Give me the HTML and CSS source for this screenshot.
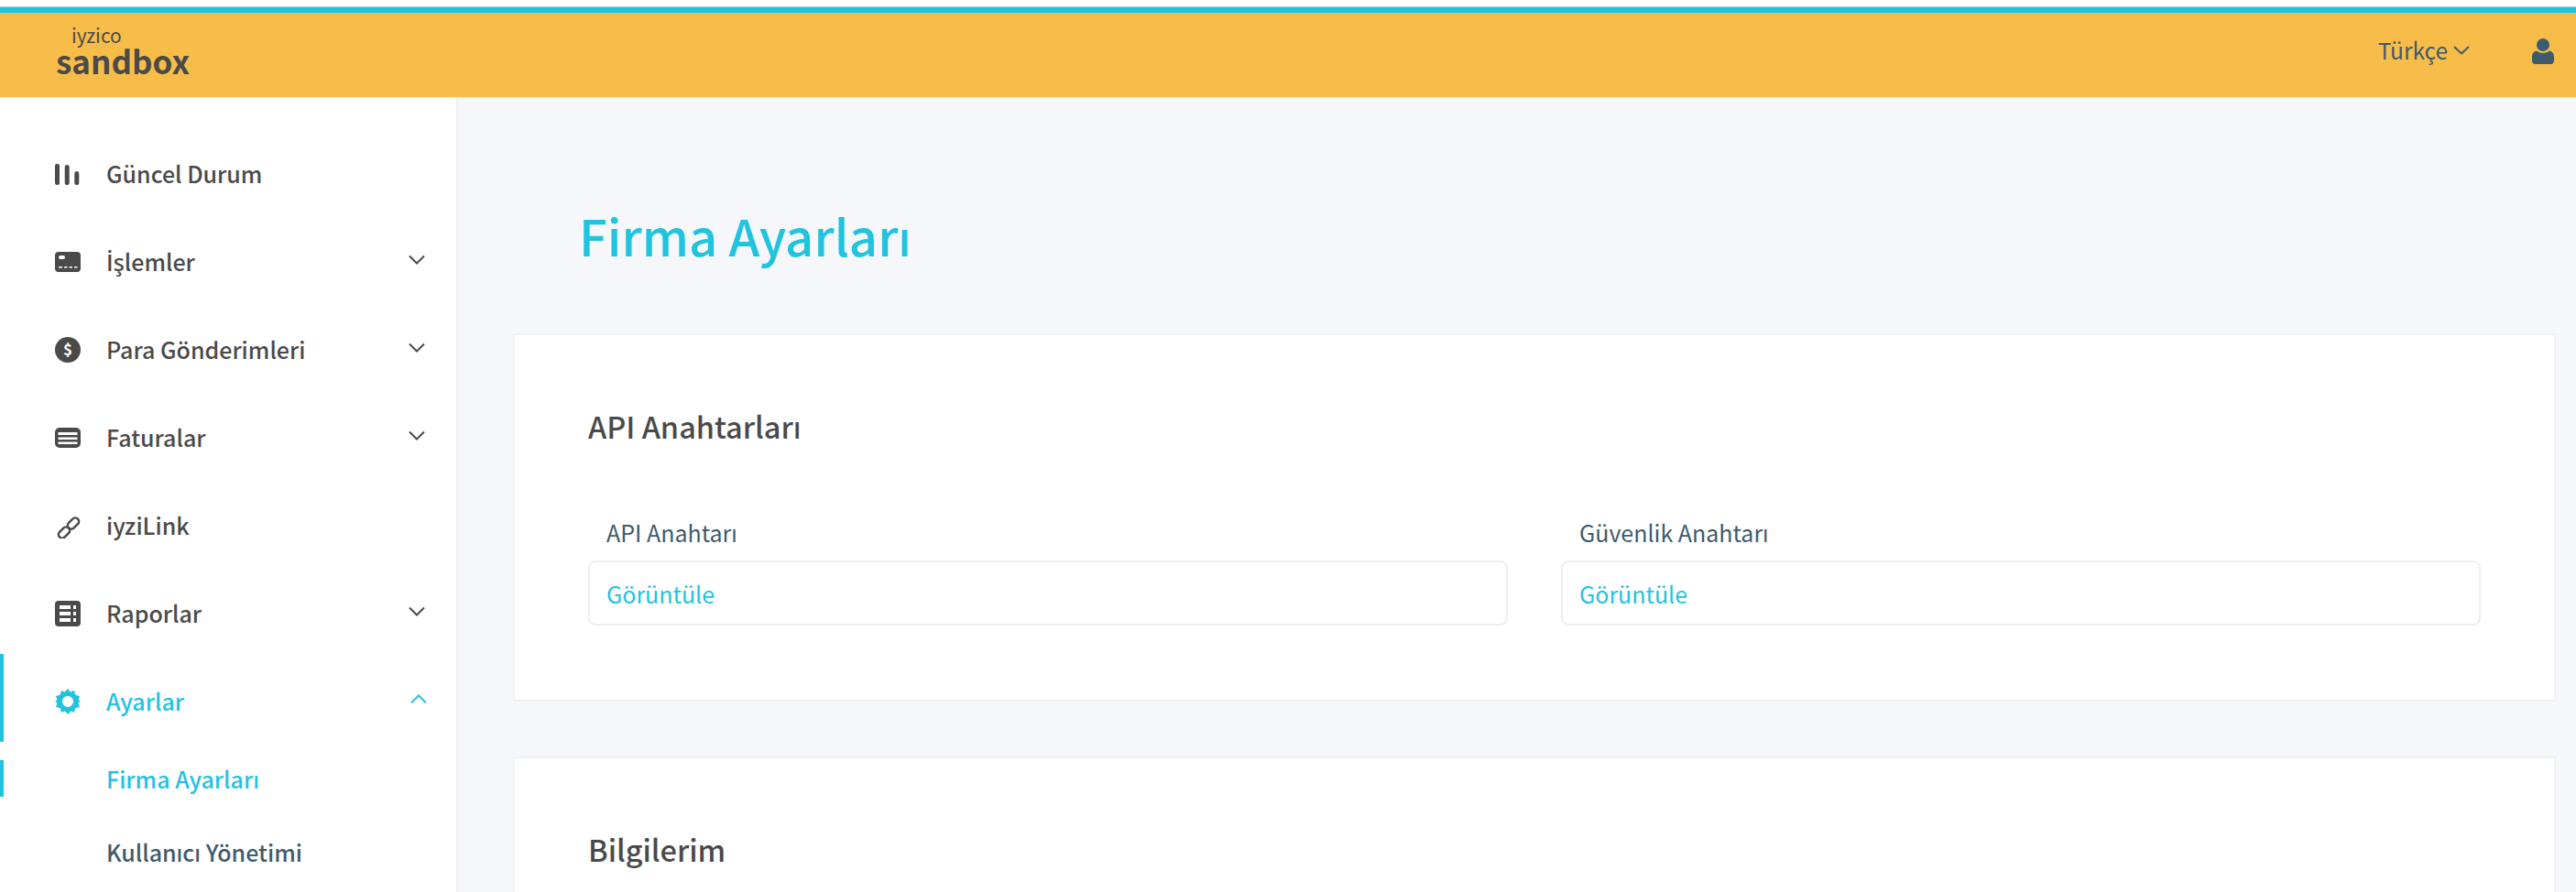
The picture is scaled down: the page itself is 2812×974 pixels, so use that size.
FILE: index.html
```html
<!DOCTYPE html>
<html lang="tr">
<head>
<meta charset="utf-8">
<title>Firma Ayarları</title>
<link rel="stylesheet" href="styles.css">
</head>
<body>
<div class="page">
  <header class="topbar">
    <div class="logo"><span class="logo-top">iyzico</span><span class="logo-main">sandbox</span></div>
    <div class="lang">Türkçe<svg class="lang-chev" viewBox="0 0 18 10"><path d="M1 1l8 7.500L17 1"/></svg></div>
    <svg class="user" viewBox="0 0 24 28"><circle cx="12" cy="7" r="7"/><path d="M5 13.500c2 1.600 4.500 2.300 7 2.300s5-.7 7-2.300c3 .5 5 3 5 6.500v4.500c0 2-1.500 3.500-3.500 3.500h-17C1.500 28 0 26.500 0 24.500V20c0-3.500 2-6 5-6.500z"/></svg>
  </header>
  <div class="body">
    <nav class="sidebar">
      <a class="item"><svg class="icon" viewBox="0 0 28 28"><rect x="0" y="2.700" width="5" height="23.300" rx="2.500"/><rect x="10.700" y="4" width="5" height="22" rx="2.500"/><rect x="21.300" y="11" width="5" height="15" rx="2.500"/></svg><span>Güncel Durum</span></a>
      <a class="item"><svg class="icon" viewBox="0 0 28 28"><path fill-rule="evenodd" d="M4 3h20a4 4 0 0 1 4 4v14a4 4 0 0 1-4 4H4a4 4 0 0 1-4-4V7a4 4 0 0 1 4-4zm2 4a2 2 0 0 0 0 4h3a2 2 0 0 0 0-4zM4 19v1.500h4V19zm6 0v1.500h3.500V19zm5.500 0v1.500H19V19zm5.500 0v1.500h3.500V19z"/></svg><span><span class="tr-i">İ</span>şlemler</span><svg class="chev" viewBox="0 0 18 11"><path d="M1 1.500l8 8 8-8"/></svg></a>
      <a class="item"><svg class="icon" viewBox="0 0 28 28"><circle cx="14" cy="14" r="14"/><text class="dollar" x="14" y="20" text-anchor="middle">$</text></svg><span>Para Gönderimleri</span><svg class="chev" viewBox="0 0 18 11"><path d="M1 1.500l8 8 8-8"/></svg></a>
      <a class="item"><svg class="icon" viewBox="0 0 28 28"><path fill-rule="evenodd" d="M5 3h18a5 5 0 0 1 5 5v12a5 5 0 0 1-5 5H5a5 5 0 0 1-5-5V8a5 5 0 0 1 5-5zm-1.500 5v3h21V8zm0 5.500v2.500h21v-2.500zm0 5v2.500h21v-2.500z"/></svg><span>Faturalar</span><svg class="chev" viewBox="0 0 18 11"><path d="M1 1.500l8 8 8-8"/></svg></a>
      <a class="item"><svg class="icon" viewBox="0 0 28 28"><rect class="link" x="3" y="17.500" width="14" height="8" rx="4" transform="rotate(-45 10 21.500)"/><rect class="link" x="13" y="7.500" width="14" height="8" rx="4" transform="rotate(-45 20 11.500)"/></svg><span>iyziLink</span></a>
      <a class="item"><svg class="icon" viewBox="0 0 28 28"><path fill-rule="evenodd" d="M4 0h20a4 4 0 0 1 4 4v20a4 4 0 0 1-4 4H4a4 4 0 0 1-4-4V4a4 4 0 0 1 4-4zm1 5v4h12V5zm15 0v4h3V5zM5 12v4h12v-4zm15 0v4h3v-4zM5 19v4h12v-4zm15 0v4h3v-4z"/></svg><span>Raporlar</span><svg class="chev" viewBox="0 0 18 11"><path d="M1 1.500l8 8 8-8"/></svg></a>
      <a class="item active"><svg class="icon" viewBox="0 0 28 28"><path fill-rule="evenodd" d="M14 0l3.200 3.400L21 1.900l1.300 4.800 4.700 1.200-1.400 4.600L28 14l-2.400 1.500 1.400 4.600-4.700 1.200-1.300 4.800-3.800-1.500L14 28l-3.200-3.400L7 26.100l-1.300-4.800L1 20.100l1.400-4.600L0 14l2.400-1.500L1 7.900l4.700-1.200L7 1.900l3.800 1.500zm0 8a6 6 0 1 0 0 12 6 6 0 0 0 0-12z"/></svg><span>Ayarlar</span><svg class="chev up" viewBox="0 0 18 11"><path d="M1 9.500l8-8 8 8"/></svg></a>
      <a class="sub active-sub">Firma Ayarları</a>
      <a class="sub">Kullanıcı Yönetimi</a>
    </nav>
    <main class="main">
      <h1 class="title">Firma Ayarları</h1>
      <section class="card">
        <h2 class="card-title">API Anahtarları</h2>
        <div class="fields">
          <div class="field"><label class="field-label">API Anahtarı</label><div class="field-box">Görüntüle</div></div>
          <div class="field"><label class="field-label">Güvenlik Anahtarı</label><div class="field-box">Görüntüle</div></div>
        </div>
      </section>
      <section class="card">
        <h2 class="card-title">Bilgilerim</h2>
      </section>
    </main>
  </div>
</div>
</body>
</html>
```
FILE: styles.css
```css
* { box-sizing: border-box; }
html, body { margin: 0; height: 100%; overflow: hidden; background: #fff; }
body { font-family: "Noto Sans CJK SC", "Noto Sans", sans-serif; color: #4a4a4a; }
.page { height: 974px; display: flex; flex-direction: column; padding-top: 7px; overflow: hidden; }
.topbar {
  height: 101px; flex: none; display: flex; align-items: center;
  background: #f8bd48; border-top: 1px solid #a9c7cf; box-shadow: inset 0 6px 0 #22c3df;
  border-bottom: 2px solid #f1f2f4; padding: 6px 24px 0 61px;
}
.logo { display: flex; flex-direction: column; margin-top: -13px; }
.logo-top { font-size: 21px; line-height: 24px; padding-left: 17px; }
.logo-main { font-size: 35px; line-height: 32px; font-weight: 700; }
.lang { margin-left: auto; display: flex; align-items: center; font-size: 24.500px; line-height: 36px; color: #3e5b6e; margin-top: -10px; }
.lang-chev { width: 18px; height: 10px; margin: 0 0 0 6px; fill: none; stroke: #3e5b6e; stroke-width: 2; }
.user { width: 24px; height: 28px; margin: -8px 0 0 68px; fill: #3e5b6e; flex: none; }
.body { flex: 1; display: flex; min-height: 0; overflow: hidden; }
.sidebar { width: 500px; flex: none; background: #fff; border-right: 2px solid #eff1f4; padding-top: 30px; font-weight: 500; font-size: 25px; }
.item { height: 96px; display: flex; align-items: center; padding: 6px 34px 0 60px; line-height: 36px; }
.icon { width: 28px; height: 28px; margin: 2px 28px 0 0; fill: #4a4a4a; flex: none; }
.tr-i { font-family: "Open Sans", sans-serif; font-weight: 600; }
.dollar { font-size: 17px; font-weight: 700; fill: #fff; }
.link { fill: none; stroke: #4a4a4a; stroke-width: 2.500; }
.chev { width: 18px; height: 11px; margin: -4px 0 0 auto; fill: none; stroke: #4a4a4a; stroke-width: 2; flex: none; }
.chev.up { margin-right: -2px; stroke: #22c3df; }
.active { color: #22c3df; box-shadow: inset 4px 0 0 #22c3df; }
.active .icon { fill: #22c3df; }
.sub { display: flex; align-items: center; height: 40px; padding-left: 116px; margin-top: 40px; color: #3e5b6e; font-size: 25px; line-height: 36px; }
.active-sub { margin-top: 20px; color: #22c3df; box-shadow: inset 4px 0 0 #22c3df; }
.main { flex: 1; min-width: 0; background: #f5f7fa; padding: 113px 22px 0 60px; overflow: hidden; }
.title { margin: 0 0 71px 72px; font-size: 54.400px; line-height: 72px; font-weight: 500; color: #22c3df; }
.card { background: #fff; border: 2px solid #eff1f3; padding: 77px 80px 81px; margin-bottom: 60px; }
.card-title { margin: 0; font-size: 32.500px; line-height: 44px; font-weight: 500; color: #4a4a4a; }
.fields { display: grid; grid-template-columns: 1fr 1fr; column-gap: 58px; margin-top: 76px; }
.field-label { display: block; padding-left: 20px; font-size: 25px; line-height: 36px; color: #3e5b6e; margin-bottom: 13px; }
.field-box { height: 71px; border: 2px solid #ebeff3; border-radius: 8px; padding: 0 18px; display: flex; align-items: center; font-size: 25px; color: #22c3df; }
```
